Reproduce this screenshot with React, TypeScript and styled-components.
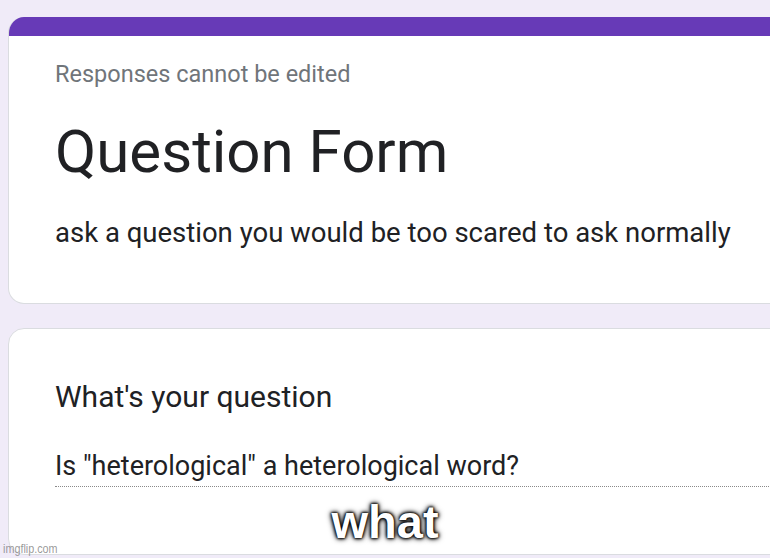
import styled, { createGlobalStyle } from "styled-components";

const GlobalStyle = createGlobalStyle`
  html, body {
    margin: 0;
    padding: 0;
    background: #f0ebf8;
    overflow: hidden;
  }
  body {
    font-family: Roboto, "Liberation Sans", Arial, sans-serif;
  }
`;

const Page = styled.div`
  position: relative;
  width: 770px;
  height: 558px;
  overflow: hidden;
  padding: 17px 0 0 8px;
  box-sizing: border-box;
  display: flex;
  flex-direction: column;
  gap: 24px;
`;

const Card = styled.div<{ $bottom: number; $top: number }>`
  width: 800px;
  background: #fff;
  border: 1px solid #dadce0;
  border-radius: 16px;
  overflow: hidden;
  box-sizing: border-box;
  padding: ${(p) => p.$top}px 0 ${(p) => p.$bottom}px 46px;
  display: flex;
  flex-direction: column;
  flex-shrink: 0;
`;

const HeaderCard = styled(Card)`
  border-top: none;
`;

const AccentBar = styled.div`
  height: 19px;
  background: #673ab7;
  margin: 0 0 0 -47px;
  width: calc(100% + 47px);
`;

const Note = styled.div`
  margin-top: 23px;
  font-size: 23.5px;
  line-height: 30px;
  color: #70757a;
`;

const Title = styled.h1`
  margin: 26.5px 0 0;
  font-size: 60px;
  font-weight: 400;
  line-height: 72px;
  color: #202124;
`;

const Description = styled.div`
  margin-top: 27px;
  font-size: 27.5px;
  line-height: 36px;
  color: #202124;
`;

const Question = styled.div`
  font-size: 30px;
  line-height: 36px;
  color: #202124;
`;

const Answer = styled.div`
  margin-top: 35.5px;
  font-size: 27px;
  line-height: 32px;
  padding-bottom: 4px;
  color: #202124;
  border-bottom: 1px dotted #8a8a8a;
`;

const Caption = styled.div`
  position: absolute;
  left: 0;
  right: 0;
  top: 496px;
  text-align: center;
  font-family: "Liberation Sans", Arial, sans-serif;
  font-weight: 700;
  font-size: 47px;
  line-height: 52px;
  color: #fff;
  text-shadow: 0 0 2px #000, 0 0 3px #000, 0 0 4px #000, 0 0 6px #000;
`;

const Watermark = styled.div`
  position: absolute;
  left: 3px;
  bottom: 2px;
  font-family: "Liberation Sans", Arial, sans-serif;
  font-size: 12px;
  line-height: 14px;
  color: rgba(120, 120, 120, 0.75);
  transform: scaleX(0.9);
  transform-origin: left center;
`;

export default function App() {
  return (
    <>
      <GlobalStyle />
      <Page>
        <HeaderCard $top={0} $bottom={52}>
          <AccentBar />
          <Note>Responses cannot be edited</Note>
          <Title>Question Form</Title>
          <Description>ask a question you would be too scared to ask normally</Description>
        </HeaderCard>
        <Card $top={50} $bottom={67}>
          <Question>What's your question</Question>
          <Answer>Is "heterological" a heterological word?</Answer>
        </Card>
        <Caption>what</Caption>
        <Watermark>imgflip.com</Watermark>
      </Page>
    </>
  );
}
